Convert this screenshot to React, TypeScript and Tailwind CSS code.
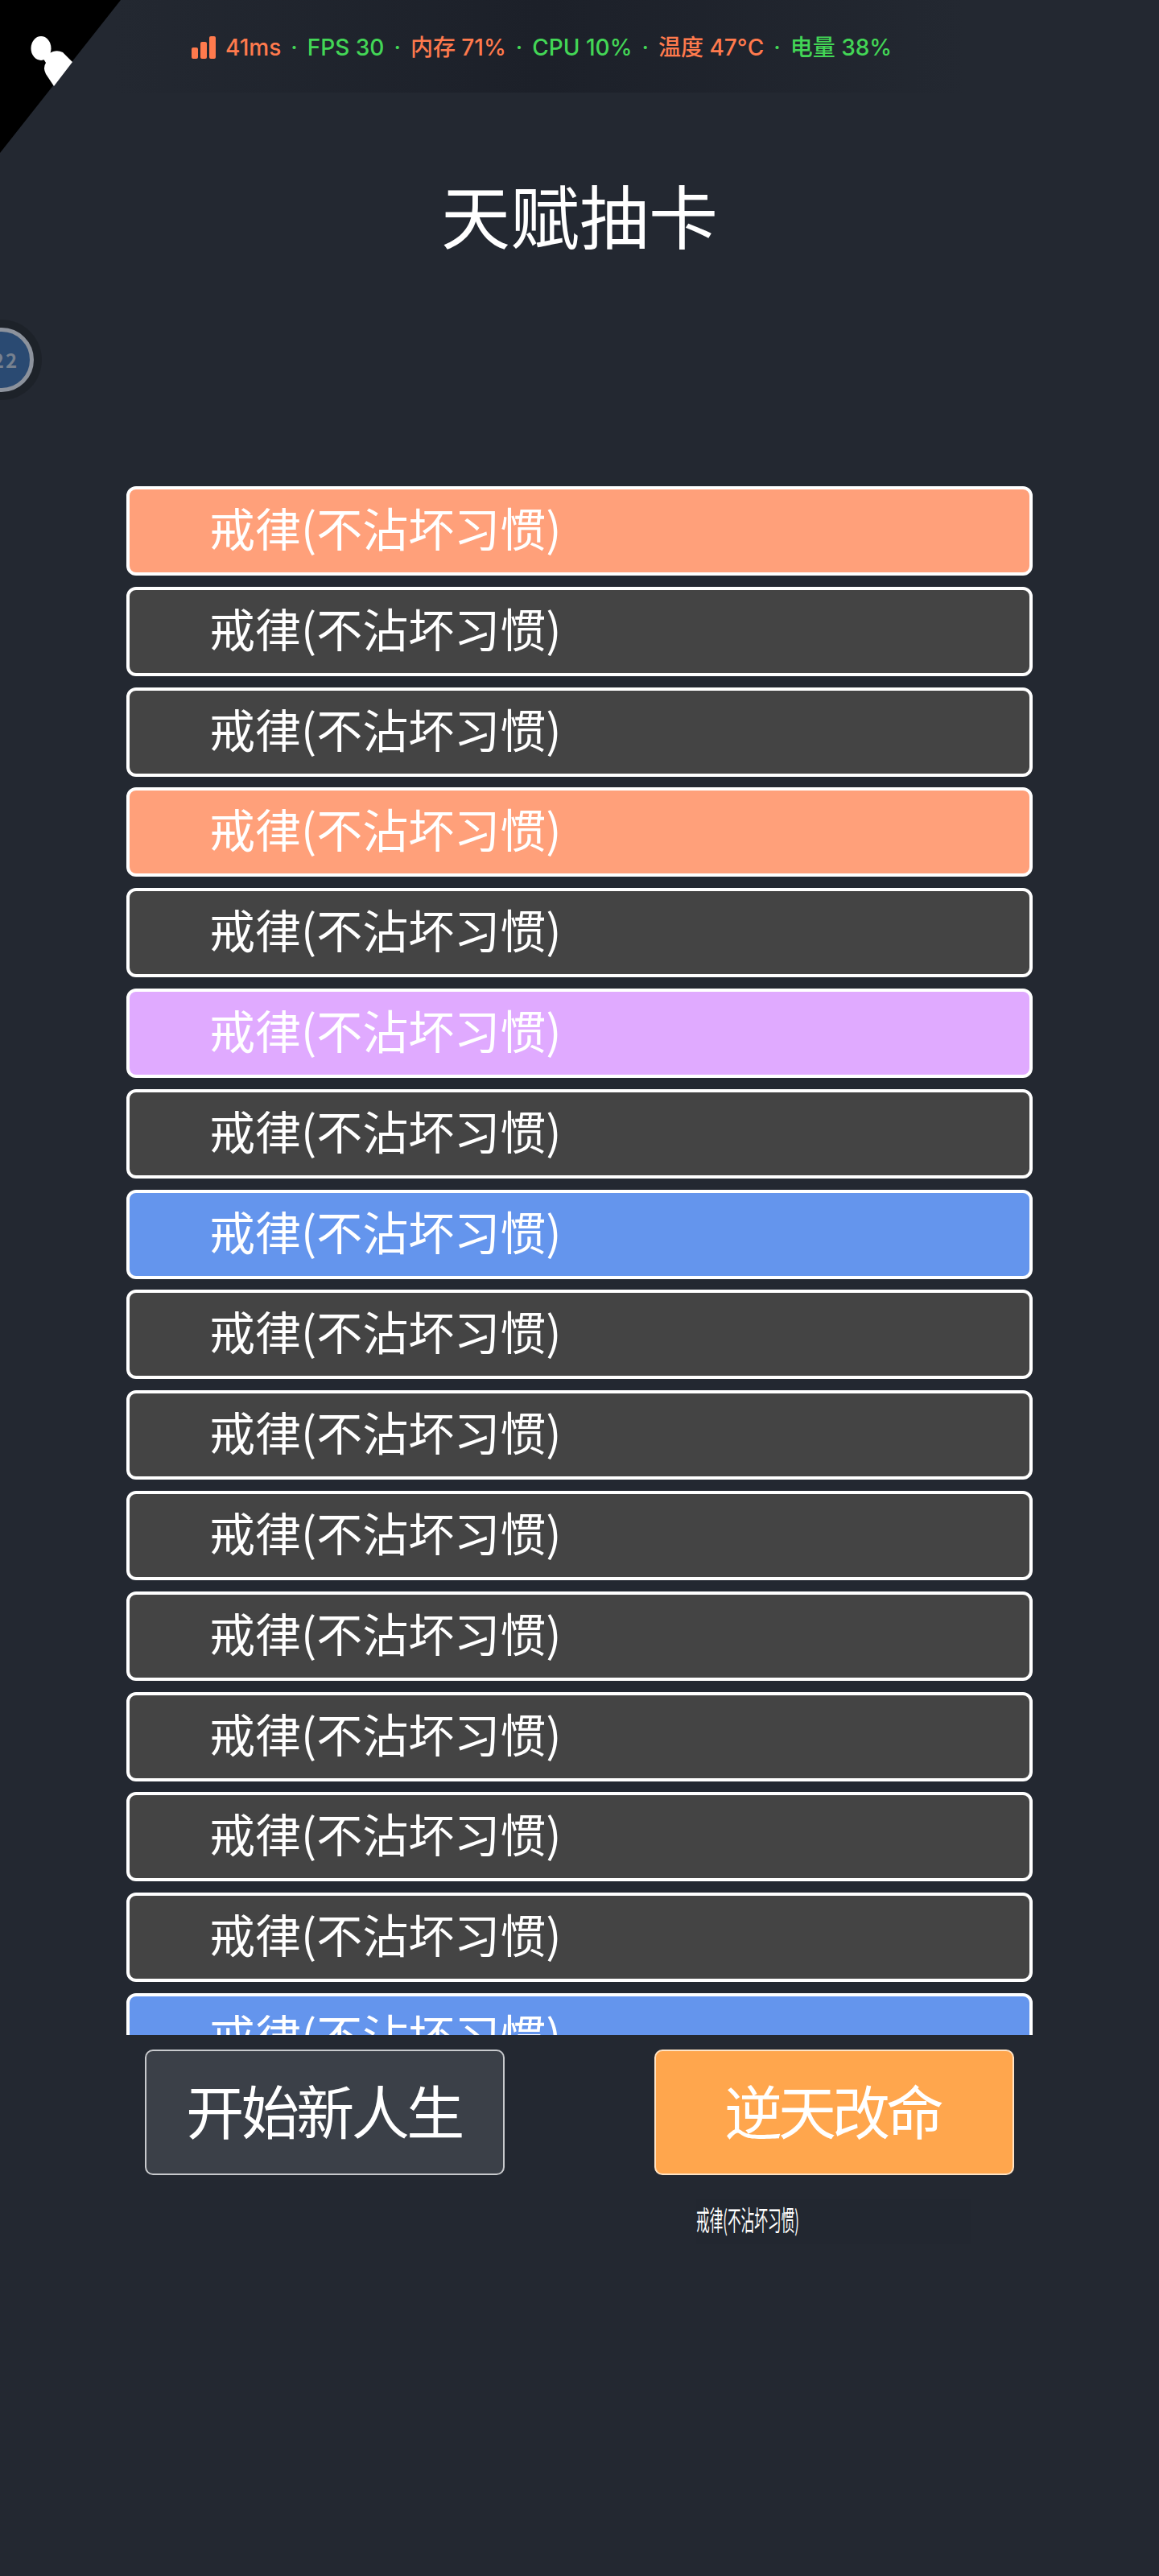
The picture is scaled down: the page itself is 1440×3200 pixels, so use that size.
const ROWS = [
  'bg-[#ffa07a]',
  'bg-[#444444]',
  'bg-[#444444]',
  'bg-[#ffa07a]',
  'bg-[#444444]',
  'bg-[#e0aaff]',
  'bg-[#444444]',
  'bg-[#6495ed]',
  'bg-[#444444]',
  'bg-[#444444]',
  'bg-[#444444]',
  'bg-[#444444]',
  'bg-[#444444]',
  'bg-[#444444]',
  'bg-[#444444]',
  'bg-[#6495ed]',
];

const CJK = "font-['Noto_Sans_CJK_SC',sans-serif]";
const ORANGE = 'text-[#ff7a4d]';
const GREEN = 'text-[#43d656]';

function Dot() {
  return <span className="mx-[12px] text-[#43d656]">·</span>;
}

/** FPS-overlay style status pill at the top of the page. */
function StatusBar() {
  return (
    <div className="absolute left-[140px] top-0 flex h-[115px] w-[1060px] items-center bg-gradient-to-r from-[#232831] via-[#1c2029] to-[#232831] pl-[98px] pt-[2px] font-['Inter','Noto_Sans_CJK_SC',sans-serif] text-[28px] font-medium leading-none">
      <svg width="30" height="28" viewBox="0 0 30 28" className="mr-[12px]">
        <rect x="0" y="14" width="8" height="14" rx="2" fill="#ff7a4d" />
        <rect x="11" y="7" width="8" height="21" rx="2" fill="#ff7a4d" />
        <rect x="22" y="0" width="8" height="28" rx="2" fill="#ff7a4d" />
      </svg>
      <span className={ORANGE}>41ms</span>
      <Dot />
      <span className={GREEN}>FPS 30</span>
      <Dot />
      <span className={ORANGE}>内存 71%</span>
      <Dot />
      <span className={GREEN}>CPU 10%</span>
      <Dot />
      <span className={ORANGE}>温度 47°C</span>
      <Dot />
      <span className={GREEN}>电量 38%</span>
    </div>
  );
}

/** Black corner flag with the chess pawn clipped by its diagonal. */
function CornerMark() {
  return (
    <svg width="150" height="192" viewBox="0 0 150 192" className="absolute left-0 top-0">
      <polygon points="0,0 150,0 0,190" fill="#000000" />
      <ellipse cx="51" cy="60" rx="12.5" ry="15" fill="#ffffff" />
      <path d="M52 70L66 64Q72 62 78 65L90 77L67 107L57 92Q53 84 57 78Z" fill="#ffffff" />
    </svg>
  );
}

export default function App() {
  return (
    <div className={`relative h-[3200px] w-[1440px] overflow-hidden bg-[#232831] ${CJK}`}>
      <StatusBar />
      <CornerMark />

      <div className="absolute left-[-38px] top-[407px] flex h-[80px] w-[80px] items-center justify-center rounded-full border-[5px] border-[#8c929c] bg-[#2a4a72] text-[24px] font-bold tracking-[2px] text-[#77818f] shadow-[0_0_0_10px_rgba(0,0,0,0.15)]">
        <span className="pl-[10px]">22</span>
      </div>

      <div className="flex flex-col items-center">
        <h1 className="mt-[201px] text-[86px] leading-[130px] font-normal text-white">天赋抽卡</h1>

        <div className="mt-[273px] flex h-[1924px] w-[1126px] flex-col gap-[13.8px] overflow-hidden">
          {ROWS.map((color, i) => (
            <div
              key={i}
              className={`flex h-[111px] shrink-0 items-center rounded-[12px] border-[4px] border-white pb-[10px] pl-[99px] text-[57px] leading-none text-white ${color}`}
            >
              戒律(不沾坏习惯)
            </div>
          ))}
        </div>

        <div className="mt-[18px] flex w-[1080px] justify-between">
          <button className="h-[156px] w-[447px] rounded-[10px] border-2 border-[#c8cacd] bg-[#3b4048] pr-[2px] pb-[8px] text-[72px] tracking-[-3.5px] text-white">
            开始新人生
          </button>
          <button className="h-[156px] w-[447px] rounded-[10px] border-2 border-[#ffe3c4] bg-[#ffa64d] pr-[5px] pb-[8px] text-[72px] tracking-[-5px] text-white">
            逆天改命
          </button>
        </div>

        <div className="flex w-[1080px] justify-end pr-[53px]">
          <div className="mt-[30px] flex h-[56px] w-[342px] items-center bg-[#222730] pb-[6px]">
            <span className="origin-left scale-x-[0.49] whitespace-nowrap text-[34px] leading-none text-white">戒律(不沾坏习惯)</span>
          </div>
        </div>
      </div>
    </div>
  );
}
